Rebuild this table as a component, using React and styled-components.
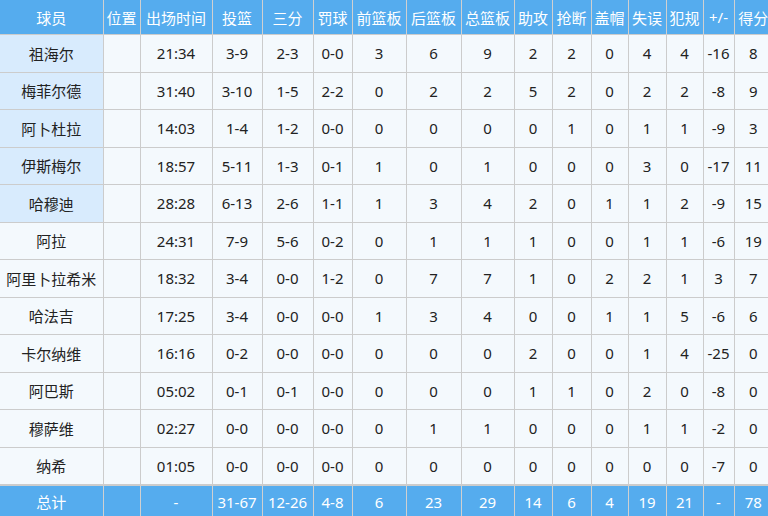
import React from 'react'
import styled, { createGlobalStyle } from 'styled-components'

const GlobalStyle = createGlobalStyle`
  html, body {
    margin: 0;
    padding: 0;
    overflow: hidden;
    background: #fff;
  }
`

const Table = styled.table`
  border-collapse: collapse;
  table-layout: fixed;
  width: 772px;
  font-family: 'Noto Sans', 'Noto Sans CJK SC', sans-serif;
  font-size: 15px;
  color: #222;
`

const HeadCell = styled.th`
  height: 34px;
  padding: 0;
  background: #55acee;
  color: #fff;
  font-weight: normal;
  text-align: center;
  white-space: nowrap;
  overflow: hidden;
  border-left: 1px solid #d0d0d0;
  &:first-child {
    border-left: none;
  }
`

const Row = styled.tr`
  height: 37.5px;
  border-top: 1px solid #cccccc;
`

const Cell = styled.td`
  padding: 0;
  text-align: center;
  white-space: nowrap;
  background: ${(p) => (p.$starter ? '#d8ebfd' : '#f4f9fd')};
  border-left: 1px solid #cccccc;
  &:first-child {
    border-left: none;
  }
`

const TotalRow = styled.tr`
  height: 33px;
  border-top: 2px solid #cccccc;
`

const TotalCell = styled.td`
  padding: 0;
  text-align: center;
  white-space: nowrap;
  background: #55acee;
  color: #fff;
  border-left: 1px solid #d0d0d0;
  &:first-child {
    border-left: none;
  }
`

const widths = [103, 37, 72, 50, 51, 39, 54, 55, 53, 38, 39, 37, 38, 37, 31, 38]

const headers = [
  '球员', '位置', '出场时间', '投篮', '三分', '罚球', '前篮板', '后篮板',
  '总篮板', '助攻', '抢断', '盖帽', '失误', '犯规', '+/-', '得分',
]

const players = [
  ['祖海尔', '', '21:34', '3-9', '2-3', '0-0', 3, 6, 9, 2, 2, 0, 4, 4, -16, 8],
  ['梅菲尔德', '', '31:40', '3-10', '1-5', '2-2', 0, 2, 2, 5, 2, 0, 2, 2, -8, 9],
  ['阿卜杜拉', '', '14:03', '1-4', '1-2', '0-0', 0, 0, 0, 0, 1, 0, 1, 1, -9, 3],
  ['伊斯梅尔', '', '18:57', '5-11', '1-3', '0-1', 1, 0, 1, 0, 0, 0, 3, 0, -17, 11],
  ['哈穆迪', '', '28:28', '6-13', '2-6', '1-1', 1, 3, 4, 2, 0, 1, 1, 2, -9, 15],
  ['阿拉', '', '24:31', '7-9', '5-6', '0-2', 0, 1, 1, 1, 0, 0, 1, 1, -6, 19],
  ['阿里卜拉希米', '', '18:32', '3-4', '0-0', '1-2', 0, 7, 7, 1, 0, 2, 2, 1, 3, 7],
  ['哈法吉', '', '17:25', '3-4', '0-0', '0-0', 1, 3, 4, 0, 0, 1, 1, 5, -6, 6],
  ['卡尔纳维', '', '16:16', '0-2', '0-0', '0-0', 0, 0, 0, 2, 0, 0, 1, 4, -25, 0],
  ['阿巴斯', '', '05:02', '0-1', '0-1', '0-0', 0, 0, 0, 1, 1, 0, 2, 0, -8, 0],
  ['穆萨维', '', '02:27', '0-0', '0-0', '0-0', 0, 1, 1, 0, 0, 0, 1, 1, -2, 0],
  ['纳希', '', '01:05', '0-0', '0-0', '0-0', 0, 0, 0, 0, 0, 0, 0, 0, -7, 0],
]

const totals = ['总计', '', '-', '31-67', '12-26', '4-8', 6, 23, 29, 14, 6, 4, 19, 21, '-', 78]

const App = () => {
  return (
    <>
      <GlobalStyle />
      <Table>
        <colgroup>
          {widths.map((w, i) => (
            <col key={i} style={{ width: w }} />
          ))}
        </colgroup>
        <thead>
          <tr>
            {headers.map((h) => (
              <HeadCell key={h}>{h}</HeadCell>
            ))}
          </tr>
        </thead>
        <tbody>
          {players.map((row, r) => (
            <Row key={row[0]}>
              {row.map((v, i) => (
                <Cell key={i} $starter={i === 0 && r < 5}>
                  {v}
                </Cell>
              ))}
            </Row>
          ))}
          <TotalRow>
            {totals.map((v, i) => (
              <TotalCell key={i}>{v}</TotalCell>
            ))}
          </TotalRow>
        </tbody>
      </Table>
    </>
  )
}

export default App
